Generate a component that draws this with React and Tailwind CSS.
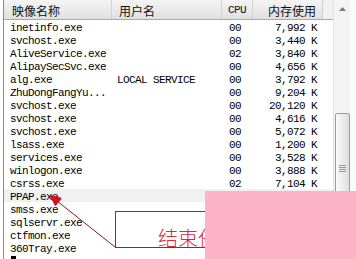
const rows = [
  ["inetinfo.exe", "", "00", "7,992 K"],
  ["svchost.exe", "", "00", "3,440 K"],
  ["AliveService.exe", "", "02", "3,840 K"],
  ["AlipaySecSvc.exe", "", "00", "4,656 K"],
  ["alg.exe", "LOCAL SERVICE", "00", "3,792 K"],
  ["ZhuDongFangYu...", "", "00", "9,204 K"],
  ["svchost.exe", "", "00", "20,120 K"],
  ["svchost.exe", "", "00", "4,616 K"],
  ["svchost.exe", "", "00", "5,072 K"],
  ["lsass.exe", "", "00", "1,200 K"],
  ["services.exe", "", "00", "3,528 K"],
  ["winlogon.exe", "", "00", "3,888 K"],
  ["csrss.exe", "", "02", "7,104 K"],
  ["PPAP.exe", "", "", ""],
  ["smss.exe", "", "", ""],
  ["sqlservr.exe", "", "", ""],
  ["ctfmon.exe", "", "", ""],
  ["360Tray.exe", "", "", ""],
];

const mono = "font-['Liberation_Mono',monospace] text-[11px] tracking-[-0.6px] leading-[17px] text-black";
const cjk = "font-['Noto_Sans_CJK_SC',sans-serif]";

export default function App() {
  return (
    <div className="relative w-[356px] h-[259px] overflow-hidden bg-white">
      <div className="flex h-full">
        <div className="w-[3px] shrink-0 bg-white" />
        <div className="flex flex-col w-[330px] shrink-0 border-l border-[#8c8c8c]">
          <div className="flex h-[20px] shrink-0 bg-gradient-to-b from-[#f4f4f4] to-[#e0e0e0] border-b border-[#a9a9a9] text-[12px] text-[#111] leading-[21px]">
            <div className={`w-[108px] pl-[8px] border-r border-[#d2d2d2] ${cjk}`}>映像名称</div>
            <div className={`w-[110px] pl-[7px] border-r border-[#d2d2d2] ${cjk}`}>用户名</div>
            <div className="w-[31px] pl-[6px] border-r border-[#d2d2d2] font-['Liberation_Mono',monospace] text-[11px] tracking-[-0.6px]">CPU</div>
            <div className={`w-[70px] pr-[6px] text-right border-r border-[#d2d2d2] ${cjk}`}>内存使用</div>
            <div className="flex-1 bg-[#f0f0f0]" />
          </div>
          <div className="flex flex-col">
            {rows.map((r, i) => (
              <div key={i} className={`flex h-[13px] overflow-visible ${i === 13 ? "bg-[#f1f1f1]" : ""} ${mono}`}>
                <div className="w-[108px] pl-[6px] whitespace-nowrap">{r[0]}</div>
                <div className="w-[110px] pl-[5px] whitespace-nowrap">{r[1]}</div>
                <div className="w-[31px] pl-[7px]">{r[2]}</div>
                <div className="w-[70px] pr-[6px] text-right whitespace-nowrap">{r[3]}</div>
              </div>
            ))}
          </div>
        </div>
        <div className="relative w-[17px] shrink-0 bg-[#f4f4f4] border-l border-[#e2e2e2]">
          <div className="h-[17px] flex items-center justify-center">
            <svg width="7" height="4" viewBox="0 0 7 4"><polygon points="3.5,0 7,4 0,4" fill="#777" /></svg>
          </div>
          <div className="absolute left-[1px] top-[113px] w-[15px] h-[110px] rounded-[2px] border border-[#9c9c9c] bg-gradient-to-r from-[#fbfbfb] to-[#dedede] flex flex-col items-center justify-center gap-[1px]">
            <div className="w-[7px] h-[1px] bg-[#9a9a9a]" />
            <div className="w-[7px] h-[1px] bg-[#9a9a9a]" />
            <div className="w-[7px] h-[1px] bg-[#9a9a9a]" />
            <div className="w-[7px] h-[1px] bg-[#9a9a9a]" />
          </div>
        </div>
        <div className="flex-1 bg-[#fafafa]" />
      </div>

      <div className="absolute left-[11px] top-[256px] w-[5px] h-[3px] bg-black" />

      <svg className="absolute left-0 top-0 pointer-events-none" width="356" height="259">
        <line x1="115" y1="247" x2="57" y2="201" stroke="#8a1a1a" strokeWidth="1" />
        <polygon points="51,196 55.5,204.7 60.5,198.5" fill="#d8101e" stroke="#d8101e" strokeWidth="2" strokeLinejoin="round" />
      </svg>

      <div className="absolute left-[115px] top-[211px] w-[150px] h-[37px] border border-[#b01830]" />
      <div className={`absolute left-[158px] top-[228px] text-[20px] leading-[20px] text-[#e0283c] font-light whitespace-nowrap ${cjk}`}>结束任务</div>

      <div className="absolute left-[205px] top-[191px] right-0 bottom-0 bg-[#fdb3c7]" />
    </div>
  );
}
